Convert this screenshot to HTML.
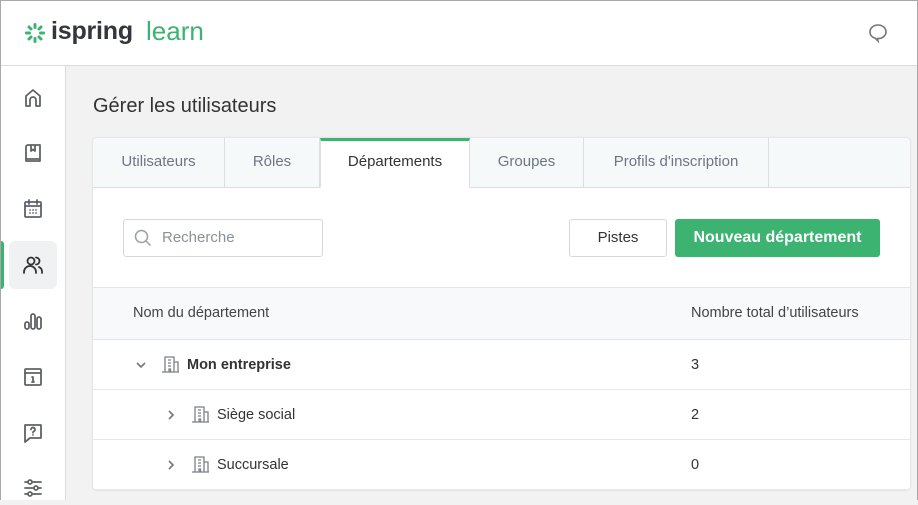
<!DOCTYPE html>
<html><head><meta charset="utf-8"><style>
*{box-sizing:border-box;margin:0;padding:0}
body{width:918px;height:500px;overflow:hidden;font-family:"Liberation Sans",sans-serif;background:#f2f2f2;position:relative;color:#333}
.a{position:absolute}
#frame{left:0;top:0;width:918px;height:500px;border:1px solid #a8a8a8;border-bottom:none;pointer-events:none;z-index:10}
#hdr{left:0;top:0;width:918px;height:66px;background:#fff;border-bottom:1px solid #dcdcdc}
#side{left:0;top:66px;width:66px;height:434px;background:#fff;border-right:1px solid #dcdcdc}
.ic{position:absolute;left:21px;width:24px;height:24px}
.ic svg{width:24px;height:24px;fill:none;stroke:#5f6368;stroke-width:1.8;stroke-linecap:round;stroke-linejoin:round}
#card{left:93px;top:138px;width:817px;height:352px;background:#fff;border-radius:4px;box-shadow:0 0 2px rgba(0,0,0,.15);overflow:hidden}
.tab{position:absolute;top:0;height:50px;line-height:47px;text-align:center;font-size:15px;color:#6b7785;background:#f6f9fa;border-right:1px solid #dcdfe2;border-bottom:1px solid #dcdfe2}
.row{position:absolute;left:0;width:817px;height:50px;border-bottom:1px solid #e6e8ea;font-size:14.5px;line-height:50px;color:#333}
.bld svg{width:20px;height:20px;fill:none;stroke:#7a8189;stroke-width:1.3}
</style></head><body>
<div id="frame" class="a"></div>
<div id="hdr" class="a">
 <svg class="a" style="left:24px;top:22px" width="22" height="22" viewBox="0 0 22 22"><g stroke="#3cb371" stroke-width="3" stroke-linecap="round"><path d="M11 2.5v3M11 16.5v3M2.5 11h3M16.5 11h3M5 5l2 2M17 5l-2 2M5 17l2-2M17 17l-2-2"/></g></svg>
 <div class="a" style="left:51px;top:17px;font-size:25px;letter-spacing:-0.2px;color:#33373d;font-weight:bold">ispring</div>
 <div class="a" style="left:146px;top:16px;font-size:26px;color:#3cb371">learn</div>
 <svg class="a" style="left:867px;top:22px" width="22" height="22" viewBox="0 0 22 22" fill="none" stroke="#777" stroke-width="1.6"><path d="M11 3c4.5 0 8 3 8 6.8s-3.5 6.8-8 6.8h-.5l.5 2.4-2.8-2.8C5 15.4 3 13 3 9.8 3 6 6.5 3 11 3z"/></svg>
</div>
<div id="side" class="a">
 <div class="a" style="left:9px;top:175px;width:48px;height:48px;background:#eff1f2;border-radius:6px"></div>
 <div class="a" style="left:0;top:175px;width:4px;height:48px;background:#3cb371;border-radius:0 3px 3px 0"></div>
 <div class="ic" style="top:20px"><svg viewBox="0 0 24 24"><path d="M5 20V10l7-6 7 6v10h-4v-6a3 3 0 0 0-6 0v6z"/></svg></div>
 <div class="ic" style="top:76px"><svg viewBox="0 0 24 24"><path d="M5 5v14h14V3H7a2 2 0 0 0-2 2zM5 17h14M10 3v6l2-1.5 2 1.5V3"/></svg></div>
 <div class="ic" style="top:131px"><svg viewBox="0 0 24 24"><rect x="4" y="5" width="16" height="15" rx="1"/><path d="M4 9h16M8 3v4M16 3v4M9 13h0M12 13h0M15 13h0M9 16h0M12 16h0M15 16h0"/></svg></div>
 <div class="ic" style="top:187px"><svg viewBox="0 0 24 24" style="stroke:#333"><circle cx="10" cy="8" r="3.5"/><path d="M3 20v-1a6 6 0 0 1 12 0v1M15 4.5a3.5 3.5 0 0 1 0 7M18 14a5 5 0 0 1 3 5v1"/></svg></div>
 <div class="ic" style="top:243px"><svg viewBox="0 0 24 24"><rect x="4" y="13" width="4" height="7" rx="2"/><rect x="10" y="5" width="4" height="15" rx="2"/><rect x="16" y="8" width="4" height="12" rx="2"/></svg></div>
 <div class="ic" style="top:299px"><svg viewBox="0 0 24 24"><rect x="4" y="4" width="16" height="16" rx="1"/><path d="M4 8h16M12 12v5M11 12h1M11 17h2"/></svg></div>
 <div class="ic" style="top:355px"><svg viewBox="0 0 24 24"><path d="M4 4h16v13H9l-5 4z"/><path d="M10 8.5a2 2 0 1 1 2.5 2c-.5.2-.5.6-.5 1.3M12 14h0"/></svg></div>
 <div class="ic" style="top:410px"><svg viewBox="0 0 24 24"><path d="M4 6h16M4 12h16M4 18h16"/><circle cx="9" cy="6" r="2" fill="#fff"/><circle cx="15" cy="12" r="2" fill="#fff"/><circle cx="9" cy="18" r="2" fill="#fff"/></svg></div>
</div>
<div class="a" style="left:93px;top:95px;font-size:20px;color:#333">Gérer les utilisateurs</div>
<div id="card" class="a">
 <div class="a" style="left:0;top:0;width:817px;height:50px;background:#f6f9fa;border-bottom:1px solid #dcdfe2"></div>
 <div class="tab" style="left:0;width:132px">Utilisateurs</div>
 <div class="tab" style="left:132px;width:95px">Rôles</div>
 <div class="tab" style="left:227px;width:150px;background:#fff;border-bottom-color:#fff;border-left:1px solid #dcdfe2;color:#333;border-top:3px solid #3cb371;line-height:41px">Départements</div>
 <div class="tab" style="left:377px;width:114px">Groupes</div>
 <div class="tab" style="left:491px;width:185px">Profils d'inscription</div>
 <div class="a" style="left:30px;top:81px;width:200px;height:38px;border:1px solid #d6d9dc;border-radius:3px"></div>
 <svg class="a" style="left:41px;top:91px" width="18" height="18" viewBox="0 0 18 18" fill="none" stroke="#9aa0a6" stroke-width="1.5"><circle cx="7.5" cy="7.5" r="6"/><path d="M12 12l4.5 4.5"/></svg>
 <div class="a" style="left:69px;top:91px;font-size:15px;color:#8a9199">Recherche</div>
 <div class="a" style="left:476px;top:81px;width:98px;height:38px;border:1px solid #d6d9dc;border-radius:3px;text-align:center;line-height:36px;font-size:15px;color:#333">Pistes</div>
 <div class="a" style="left:582px;top:81px;width:205px;height:38px;background:#3cb371;border-radius:3px;text-align:center;line-height:38px;font-size:16px;color:#fff;font-weight:bold">Nouveau département</div>
 <div class="row" style="top:149px;height:53px;background:#f7f9fa;border-top:1px solid #e3e6e8;border-bottom:1px solid #e3e6e8;line-height:50px;color:#444">
  <span class="a" style="left:40px">Nom du département</span><span class="a" style="left:598px">Nombre total d’utilisateurs</span></div>
 <div class="row" style="top:202px">
  <svg class="a" style="left:42px;top:20px" width="12" height="10" viewBox="0 0 12 10" fill="none" stroke="#777" stroke-width="1.6"><path d="M2 3l4 4 4-4"/></svg>
  <span class="a bld" style="left:67px;top:14px;line-height:0"><svg viewBox="0 0 20 20"><path d="M5 18V3h9v15M14 8h4v10M2 18h17M8 6h3M8 9h3M8 12h3M9 18v-3h1.5v3"/></svg></span>
  <span class="a" style="left:94px;font-weight:bold">Mon entreprise</span><span class="a" style="left:598px">3</span></div>
 <div class="row" style="top:252px">
  <svg class="a" style="left:73px;top:19px" width="10" height="12" viewBox="0 0 10 12" fill="none" stroke="#777" stroke-width="1.6"><path d="M3 2l4 4-4 4"/></svg>
  <span class="a bld" style="left:97px;top:14px;line-height:0"><svg viewBox="0 0 20 20"><path d="M5 18V3h9v15M14 8h4v10M2 18h17M8 6h3M8 9h3M8 12h3M9 18v-3h1.5v3"/></svg></span>
  <span class="a" style="left:124px">Siège social</span><span class="a" style="left:598px">2</span></div>
 <div class="row" style="top:302px">
  <svg class="a" style="left:73px;top:19px" width="10" height="12" viewBox="0 0 10 12" fill="none" stroke="#777" stroke-width="1.6"><path d="M3 2l4 4-4 4"/></svg>
  <span class="a bld" style="left:97px;top:14px;line-height:0"><svg viewBox="0 0 20 20"><path d="M5 18V3h9v15M14 8h4v10M2 18h17M8 6h3M8 9h3M8 12h3M9 18v-3h1.5v3"/></svg></span>
  <span class="a" style="left:124px">Succursale</span><span class="a" style="left:598px">0</span></div>
</div>
</body></html>
